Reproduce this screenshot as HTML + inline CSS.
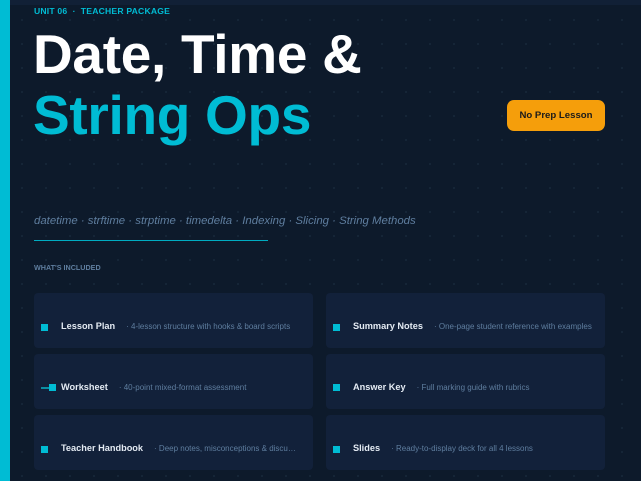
<!DOCTYPE html>
<html><head><style>
*{margin:0;padding:0;box-sizing:border-box}
body{width:641px;height:481px;overflow:hidden;background:#0d1a2b;font-family:"Liberation Sans",sans-serif;position:relative;
background-image:radial-gradient(circle,#172739 0.8px,transparent 1.2px);background-size:24px 24px;background-position:10px 8px}
.top{position:absolute;left:0;top:0;width:641px;height:5px;background:#112036}
.bar{position:absolute;left:0;top:0;width:10px;height:481px;background:#00bcd4}
.kick{position:absolute;left:34px;top:6px;font-size:8.6px;font-weight:bold;color:#00bcd4;letter-spacing:0.2px}
.h1{position:absolute;left:33px;font-size:55px;font-weight:bold;line-height:1;letter-spacing:-0.3px}
.btn{position:absolute;left:507px;top:100px;width:98px;height:31px;background:#f59e0b;border-radius:7px;color:#1a1a1a;font-size:9.6px;font-weight:bold;text-align:center;line-height:31px}
.tags{position:absolute;left:34px;top:215px;font-size:11.4px;font-style:italic;color:#5f7e9f}
.line{position:absolute;left:34px;top:240px;width:234px;height:1px;background:#00acc1}
.wi{position:absolute;left:34px;top:263px;font-size:7.2px;font-weight:bold;color:#5f7e9f}
.card{position:absolute;width:279px;height:55px;background:#12213a;border-radius:4px}
.sq{position:absolute;left:7px;top:31px;width:7px;height:7px;background:#00bcd4}
.t{position:absolute;left:27px;top:28px;font-size:9.2px;font-weight:bold;color:#e4ebf3;white-space:nowrap}
.d{color:#5f7e9f;font-weight:normal;font-size:8px;margin-left:11px}
</style></head><body>
<div class="top"></div><div class="bar"></div>
<div class="kick">UNIT 06 &nbsp;·&nbsp; TEACHER PACKAGE</div>
<div class="h1" style="top:27px;color:#fff">Date, Time &amp;</div>
<div class="h1" style="top:88px;color:#00bcd4">String Ops</div>
<div class="btn">No Prep Lesson</div>
<div class="tags">datetime · strftime · strptime · timedelta · Indexing · Slicing · String Methods</div>
<div class="line"></div>
<div class="wi">WHAT'S INCLUDED</div>

<div class="card" style="left:34px;top:293px"><div class="sq"></div><div class="t">Lesson Plan<span class="d">· 4-lesson structure with hooks &amp; board scripts</span></div></div>
<div class="card" style="left:326px;top:293px"><div class="sq"></div><div class="t">Summary Notes<span class="d">· One-page student reference with examples</span></div></div>
<div class="card" style="left:34px;top:354px"><div style="position:absolute;left:7px;top:33px;width:8px;height:2px;background:#0c8fa3"></div><div class="sq" style="left:15px;top:30px"></div><div class="t" style="top:28px">Worksheet<span class="d">· 40-point mixed-format assessment</span></div></div>
<div class="card" style="left:326px;top:354px"><div class="sq" style="top:30px"></div><div class="t" style="top:28px">Answer Key<span class="d">· Full marking guide with rubrics</span></div></div>
<div class="card" style="left:34px;top:415px"><div class="sq"></div><div class="t">Teacher Handbook<span class="d">· Deep notes, misconceptions &amp; discu…</span></div></div>
<div class="card" style="left:326px;top:415px"><div class="sq"></div><div class="t">Slides<span class="d">· Ready-to-display deck for all 4 lessons</span></div></div>
</body></html>
